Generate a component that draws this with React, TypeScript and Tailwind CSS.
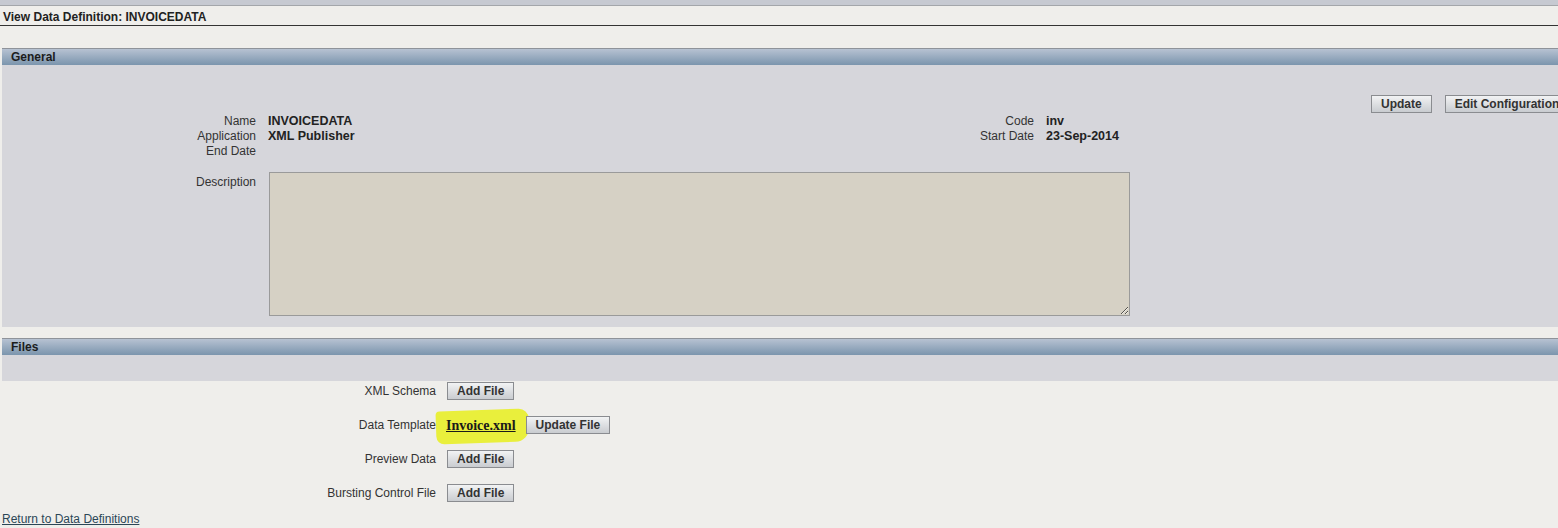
const font = { fontFamily: '"Liberation Sans", Arial, sans-serif' }

function Btn({ children }: { children: React.ReactNode }) {
  return (
    <button
      type="button"
      className="relative h-[18px] px-[9px] border border-[#8a8c90] bg-gradient-to-b from-[#f2f3f4] to-[#c9ccd0] text-[12px] leading-[16px] font-bold text-[#333] whitespace-nowrap"
    >
      {children}
    </button>
  )
}

function SectionBar({ title }: { title: string }) {
  return (
    <div className="h-[17px] border-t border-[#8f939a] bg-gradient-to-b from-[#b7c2d2] to-[#7b95ad] pl-[9px] text-[12px] leading-[17px] font-bold text-[#1c1c1c]">
      {title}
    </div>
  )
}

function Field({ label, value }: { label: string; value?: string }) {
  return (
    <div className="flex h-[15px] leading-[15px]">
      <div className="w-[254px] shrink-0 text-right text-[#333]">{label}</div>
      <div className="pl-[12px] font-bold text-[#222] text-[12.5px]">{value}</div>
    </div>
  )
}

function FileRow({ label, children }: { label: string; children: React.ReactNode }) {
  return (
    <div className="flex items-center h-[18px]">
      <div className="w-[434px] shrink-0 text-right text-[#333]">{label}</div>
      <div className="flex items-center pl-[11px]">{children}</div>
    </div>
  )
}

export default function App() {
  return (
    <div className="w-[1558px] h-[528px] overflow-hidden bg-[#efeeeb] text-[12px]" style={font}>
      {/* top strip */}
      <div className="h-[6px] bg-[#c6c9d1] border-b border-[#a3a6aa]" />

      {/* page title */}
      <div className="h-[20px] border-b border-[#333] px-[3px] pt-[4px] leading-[15px] font-bold text-[#222]">
        View Data Definition: INVOICEDATA
      </div>

      {/* General */}
      <div className="ml-[2px] mt-[22px]">
        <SectionBar title="General" />
        <div className="h-[262px] bg-[#d6d6db] pt-[30px]">
          <div className="flex gap-[13px] pl-[1369px]">
            <Btn>Update</Btn>
            <Btn>Edit Configuration</Btn>
          </div>
          <div className="flex mt-[1px]">
            <div className="w-[932px] shrink-0">
              <Field label="Name" value="INVOICEDATA" />
              <Field label="Application" value="XML Publisher" />
              <Field label="End Date" />
            </div>
            <div className="flex leading-[15px]">
              <div className="w-[100px] text-right text-[#333]">
                <div>Code</div>
                <div>Start Date</div>
              </div>
              <div className="pl-[12px] font-bold text-[#222] text-[12.5px]">
                <div>inv</div>
                <div>23-Sep-2014</div>
              </div>
            </div>
          </div>
          <div className="flex mt-[13px]">
            <div className="w-[254px] shrink-0 text-right text-[#333] pt-[1px]">Description</div>
            <div className="pl-[13px]">
              <textarea
                readOnly
                className="block w-[861px] h-[144px] bg-[#d6d1c5] border border-[#9a9a9a] outline-none"
              />
            </div>
          </div>
        </div>
      </div>

      {/* Files */}
      <div className="ml-[2px] mt-[11px]">
        <SectionBar title="Files" />
        <div className="h-[26px] bg-[#d6d6db]" />
        <div className="flex flex-col gap-[16px] pt-[1px]">
          <FileRow label="XML Schema">
            <Btn>Add File</Btn>
          </FileRow>
          <FileRow label="Data Template">
            <span className="relative -ml-[1px] mr-[10px]">
              <span className="absolute -left-[10px] -right-[13px] -top-[5px] -bottom-[7px] bg-[#e9ef3c] rounded-[4px_10px_14px_8px] -rotate-2" />
              <a
                href="#"
                className="relative font-bold text-[#1a1a1a] underline text-[14px]"
                style={{ fontFamily: '"Liberation Serif", "Times New Roman", serif' }}
              >
                Invoice.xml
              </a>
            </span>
            <Btn>Update File</Btn>
          </FileRow>
          <FileRow label="Preview Data">
            <Btn>Add File</Btn>
          </FileRow>
          <FileRow label="Bursting Control File">
            <Btn>Add File</Btn>
          </FileRow>
        </div>
      </div>

      <div className="pl-[2px] mt-[10px] leading-[15px]">
        <a href="#" className="underline text-[#2b4656]">
          Return to Data Definitions
        </a>
      </div>
    </div>
  )
}
